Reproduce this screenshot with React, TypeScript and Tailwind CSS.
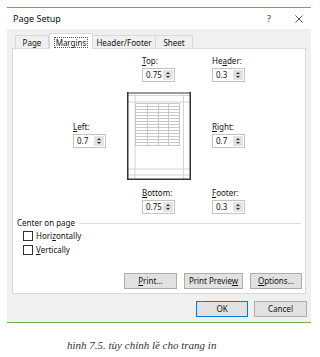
import React from "react";

function Spin({ value }: { value: string }) {
  return (
    <div className="flex h-[14px] w-[33px] border border-[#c3c3c3] bg-white">
      <div className="flex-1 pl-[3px] text-[8px] leading-[12px] text-[#111]">{value}</div>
      <div className="my-[1px] mr-[1px] w-[10px] bg-[#e3e3e3]">
        <svg width="10" height="10" viewBox="0 0 10 10">
          <polygon points="3,4 7,4 5,2" fill="#333" />
          <line x1="2" y1="5" x2="8" y2="5" stroke="#c6c6c6" strokeWidth="1" />
          <polygon points="3,6 7,6 5,8" fill="#333" />
        </svg>
      </div>
    </div>
  );
}

function Field({ label, value }: { label: React.ReactNode; value: string }) {
  return (
    <div className="flex flex-col">
      <div className="h-[10px] text-[8px] leading-[10px] text-[#111]">{label}</div>
      <div className="mt-[2px]">
        <Spin value={value} />
      </div>
    </div>
  );
}

function Preview() {
  const rows: number[] = [];
  for (let y = 11; y <= 54; y += 3) rows.push(y);
  const cols = [8, 20, 31, 41, 52];
  return (
    <svg width="64" height="88" viewBox="0 0 64 88">
      <rect x="0" y="0" width="64" height="88" fill="#fff" />
      <line x1="8" y1="0" x2="8" y2="88" stroke="#d4d4d4" strokeWidth="1" />
      <line x1="56.5" y1="0" x2="56.5" y2="88" stroke="#d4d4d4" strokeWidth="1" />
      <line x1="0" y1="3.5" x2="64" y2="3.5" stroke="#d4d4d4" strokeWidth="1" />
      <line x1="0" y1="10" x2="64" y2="10" stroke="#d4d4d4" strokeWidth="1" />
      <line x1="0" y1="77" x2="64" y2="77" stroke="#d4d4d4" strokeWidth="1" />
      <line x1="0" y1="83" x2="64" y2="83" stroke="#d4d4d4" strokeWidth="1" />
      {rows.map((y) => (
        <line key={y} x1="8" y1={y + 0.5} x2="52" y2={y + 0.5} stroke="#c8c8c8" strokeWidth="1" />
      ))}
      {cols.map((x) => (
        <line key={x} x1={x + 0.5} y1="11" x2={x + 0.5} y2="54" stroke="#c8c8c8" strokeWidth="1" />
      ))}
      <rect x="0" y="0" width="64" height="2" fill="#9a9a9a" />
      <rect x="0" y="0" width="1.5" height="88" fill="#333" />
      <rect x="62.5" y="0" width="1.5" height="88" fill="#333" />
      <rect x="0" y="86.5" width="64" height="1.5" fill="#333" />
    </svg>
  );
}

function Btn({ children, w, primary }: { children: React.ReactNode; w: string; primary?: boolean }) {
  return (
    <div
      className={`${w} flex h-[16px] items-center justify-center border bg-[#e1e1e1] text-[8px] text-[#111] ${
        primary ? "border-[#0078d7]" : "border-[#adadad]"
      }`}
    >
      {children}
    </div>
  );
}

export default function App() {
  return (
    <div className="relative h-[357px] w-[320px] bg-white font-['Noto_Sans',sans-serif] text-[8px] text-[#111]">
      <div className="pt-[7px] pl-[7px]">
        <div className="w-[304px] border-t border-b border-[#6fae4f]">
          {/* title bar */}
          <div className="flex h-[21px] items-center bg-white pl-[6px]">
            <div className="text-[9px] text-[#111]">Page Setup</div>
            <div className="ml-auto mr-[24px] text-[9px] text-[#333]">?</div>
            <svg width="8" height="8" viewBox="0 0 8 8" className="mr-[8px]">
              <line x1="0.5" y1="0.5" x2="7.5" y2="7.5" stroke="#444" strokeWidth="0.9" />
              <line x1="7.5" y1="0.5" x2="0.5" y2="7.5" stroke="#444" strokeWidth="0.9" />
            </svg>
          </div>
          {/* body */}
          <div className="bg-[#f0f0f0] px-[5px] pt-[4px] pb-[5px]">
            {/* tabs */}
            <div className="flex h-[15px] items-end pl-[3px]">
              <div className="flex h-[13px] w-[34px] items-center justify-center border border-b-0 border-[#d9d9d9] bg-[#f0f0f0] pt-[1px]">
                Page
              </div>
              <div className="relative z-10 -mb-[1px] flex h-[16px] w-[44px] items-center justify-center border border-b-0 border-[#d9d9d9] bg-white pt-[1px]">
                <span className="border border-dotted border-[#555] px-[1px] leading-[9px]">Margins</span>
              </div>
              <div className="flex h-[13px] w-[63px] items-center justify-center border border-b-0 border-l-0 border-[#d9d9d9] bg-[#f0f0f0] pt-[1px]">
                Header/Footer
              </div>
              <div className="flex h-[13px] w-[37px] items-center justify-center border border-b-0 border-l-0 border-[#d9d9d9] bg-[#f0f0f0] pt-[1px]">
                Sheet
              </div>
            </div>
            {/* panel */}
            <div className="flex h-[246px] w-[294px] flex-col border border-[#d9d9d9] bg-white">
              <div className="ml-[60px] grid grid-cols-[54px_85px_1fr] pt-[7px]">
                <div />
                <div className="pl-[15px]">
                  <Field label={<><u>T</u>op:</>} value="0.75" />
                </div>
                <div>
                  <Field label={<>He<u>a</u>der:</>} value="0.3" />
                </div>

                <div className="mt-[10px] pt-[30px]">
                  <Field label={<><u>L</u>eft:</>} value="0.7" />
                </div>
                <div className="mt-[10px]">
                  <Preview />
                </div>
                <div className="mt-[10px] pt-[30px]">
                  <Field label={<><u>R</u>ight:</>} value="0.7" />
                </div>

                <div />
                <div className="mt-[8px] pl-[15px]">
                  <Field label={<><u>B</u>ottom:</>} value="0.75" />
                </div>
                <div className="mt-[8px]">
                  <Field label={<><u>F</u>ooter:</>} value="0.3" />
                </div>
              </div>

              <div className="mt-[4px] ml-[4px] mr-[4px] flex h-[10px] items-center">
                <span className="leading-[10px]">Center on page</span>
                <div className="ml-[4px] h-0 flex-1 border-t border-[#dcdcdc]" />
              </div>
              <div className="mt-[1px] ml-[10px] flex h-[14px] items-center gap-[3px]">
                <div className="h-[10px] w-[10px] border border-[#333] bg-white" />
                <span>
                  Hori<u>z</u>ontally
                </span>
              </div>
              <div className="ml-[10px] flex h-[14px] items-center gap-[3px]">
                <div className="h-[10px] w-[10px] border border-[#333] bg-white" />
                <span>
                  <u>V</u>ertically
                </span>
              </div>

              <div className="mt-auto mb-[4px] mr-[3px] flex justify-end gap-[7px]">
                <Btn w="w-[53px]">
                  <span>
                    <u>P</u>rint...
                  </span>
                </Btn>
                <Btn w="w-[59px]">
                  <span>
                    Print Previe<u>w</u>
                  </span>
                </Btn>
                <Btn w="w-[52px]">
                  <span>
                    <u>O</u>ptions...
                  </span>
                </Btn>
              </div>
            </div>
            {/* dialog buttons */}
            <div className="mt-[7px] flex justify-end gap-[6px] -mr-[1px]">
              <Btn w="w-[52px]" primary>
                OK
              </Btn>
              <Btn w="w-[53px]">Cancel</Btn>
            </div>
          </div>
        </div>
      </div>
      <div className="pt-[16px] pl-[67px] font-['Liberation_Serif',serif] text-[11px] italic leading-[13px] text-[#333]">
        hình 7.5. tùy chỉnh lề cho trang in
      </div>
    </div>
  );
}
